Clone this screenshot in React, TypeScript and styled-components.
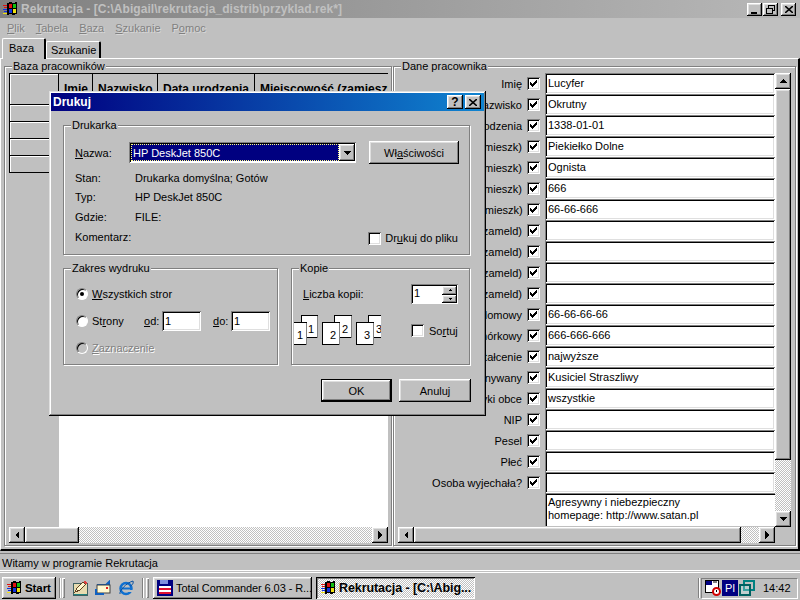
import React from "react";
import styled, { createGlobalStyle, css } from "styled-components";

const raised = css`
  box-shadow: inset -1px -1px 0 #000, inset 1px 1px 0 #fff, inset -2px -2px 0 #808080,
    inset 2px 2px 0 #dfdfdf;
`;

const sunken = css`
  box-shadow: inset 1px 1px 0 #808080, inset -1px -1px 0 #fff, inset 2px 2px 0 #000,
    inset -2px -2px 0 #dfdfdf;
`;

const dither = css`
  background-color: #c0c0c0;
  background-image: conic-gradient(#fff 25%, #c0c0c0 0 50%, #fff 0 75%, #c0c0c0 0);
  background-size: 2px 2px;
`;

const GlobalStyle = createGlobalStyle`
  html, body {
    margin: 0;
    padding: 0;
    background: #c0c0c0;
    overflow: hidden;
  }
  * {
    box-sizing: border-box;
  }
  svg {
    flex: none;
  }
  body {
    font-family: "Liberation Sans", Arial, sans-serif;
    font-size: 11px;
    color: #000;
  }
`;

const Screen = styled.div`
  position: relative;
  width: 800px;
  height: 600px;
  display: flex;
  flex-direction: column;
  overflow: hidden;
  background: #c0c0c0;
`;

const TitleBar = styled.div`
  height: 18px;
  flex: none;
  display: flex;
  align-items: center;
  padding: 0 4px 0 2px;
  background: linear-gradient(90deg, #808080, #b8b8b8);
`;

const TitleText = styled.div`
  margin-left: 3px;
  flex: 1;
  font-weight: bold;
  font-size: 12px;
  letter-spacing: 0.05px;
  color: #c0c0c0;
  white-space: nowrap;
`;

const CaptionButton = styled.div<{ $gap?: number }>`
  width: 15px;
  height: 13px;
  margin-left: ${(p) => p.$gap ?? 0}px;
  display: flex;
  align-items: center;
  justify-content: center;
  font-size: 12px;
  font-weight: bold;
  background: #c0c0c0;
  ${raised}
`;

const DialogCaptionButton = styled(CaptionButton)`
  width: 16px;
  height: 14px;
  color: #000;
`;

const MenuBar = styled.div`
  height: 20px;
  flex: none;
  display: flex;
  align-items: center;
  padding-left: 7px;
  gap: 11px;
  color: #808080;
  text-shadow: 1px 1px 0 #d8d8d8;
`;

const TabRow = styled.div`
  height: 20px;
  flex: none;
  display: flex;
  align-items: flex-end;
  padding-left: 2px;
  position: relative;
  z-index: 1;
`;

const Tab = styled.div<{ $active?: boolean }>`
  height: ${(p) => (p.$active ? 21 : 17)}px;
  width: ${(p) => (p.$active ? 44 : 55)}px;
  margin-bottom: ${(p) => (p.$active ? -1 : 0)}px;
  padding: ${(p) => (p.$active ? "1px 0 0 6px" : "1px 0 0 4px")};
  display: flex;
  align-items: ${(p) => (p.$active ? "flex-start" : "center")};
  line-height: 17px;
  background: #c0c0c0;
  border-top: 1px solid #fff;
  border-left: 1px solid #fff;
  border-right: 2px solid #000;
  border-top-left-radius: 2px;
  border-top-right-radius: 2px;
`;

const TabPanel = styled.div`
  height: 493px;
  flex: none;
  display: flex;
  gap: 1px;
  padding: 7px 2px 3px 3px;
  border-top: 1px solid #fff;
  border-left: 1px solid #fff;
  border-right: 2px solid #000;
  border-bottom: 2px solid #000;
`;

const Group = styled.div<{ $width?: number; $height?: number }>`
  position: relative;
  ${(p) => (p.$width ? `width: ${p.$width}px; flex: none;` : p.$height ? "flex: none;" : "flex: 1; min-width: 0;")}
  ${(p) => (p.$height ? `height: ${p.$height}px;` : "")}
  border: 1px solid #808080;
  box-shadow: 1px 1px 0 #fff, inset 1px 1px 0 #fff;
`;

const Legend = styled.div`
  position: absolute;
  top: -7px;
  left: 7px;
  padding: 0 1px;
  line-height: 13px;
  background: #c0c0c0;
  white-space: nowrap;
`;

const ScrollFrame = styled.div<{ $withVertical?: boolean }>`
  height: 100%;
  display: grid;
  grid-template-columns: ${(p) => (p.$withVertical ? "1fr 16px" : "1fr")};
  grid-template-rows: 1fr 16px;
  padding: 6px 4px 2px 4px;
`;

const HScroll = styled.div`
  display: flex;
  min-width: 0;
`;

const VScroll = styled.div`
  display: flex;
  flex-direction: column;
  min-height: 0;
`;

const ScrollButton = styled.div`
  width: 16px;
  height: 16px;
  flex: none;
  display: flex;
  align-items: center;
  justify-content: center;
  background: #c0c0c0;
  ${raised}
`;

const ScrollThumb = styled.div<{ $size: number; $vertical?: boolean }>`
  flex: none;
  ${(p) => (p.$vertical ? `height: ${p.$size}px;` : `width: ${p.$size}px;`)}
  background: #c0c0c0;
  ${raised}
`;

const ScrollTrack = styled.div`
  flex: 1;
  ${dither}
`;

const TableView = styled.div`
  background: #c0c0c0;
  display: flex;
  flex-direction: column;
  min-height: 0;
`;

const TableRow = styled.div`
  display: flex;
  flex: none;
`;

const FixedCell = styled.div<{ $height: number; $top?: boolean }>`
  width: 50px;
  height: ${(p) => p.$height}px;
  flex: none;
  border-left: 1px solid #000;
  border-right: 1px solid #000;
  border-bottom: 1px solid #000;
  ${(p) => (p.$top ? "border-top: 1px solid #000;" : "")}
  box-shadow: inset 1px 1px 0 #fff;
`;

const HeaderCell = styled.div<{ $width: number; $clip?: boolean }>`
  width: ${(p) => p.$width}px;
  height: 32px;
  flex: ${(p) => (p.$clip ? "1" : "none")};
  min-width: 0;
  display: flex;
  align-items: center;
  padding-left: 5px;
  font-size: 12px;
  font-weight: bold;
  white-space: nowrap;
  overflow: hidden;
  border-top: 1px solid #000;
  border-right: ${(p) => (p.$clip ? "none" : "1px solid #000")};
  border-bottom: 1px solid #000;
`;

const DataFill = styled.div`
  flex: 1;
  background: #fff;
`;

const TableRest = styled.div`
  flex: 1;
  margin-left: 50px;
  background: #fff;
`;

const FormView = styled.div`
  display: flex;
  flex-direction: column;
  overflow: hidden;
  min-height: 0;
`;

const FormRow = styled.div`
  height: 21px;
  flex: none;
  display: flex;
  align-items: center;
`;

const FieldLabel = styled.div`
  flex: 1;
  min-width: 0;
  text-align: right;
  white-space: nowrap;
`;

const CheckWrap = styled.div`
  width: 23px;
  flex: none;
  display: flex;
  justify-content: center;
`;

const CheckBoxFace = styled.div`
  width: 13px;
  height: 13px;
  flex: none;
  display: flex;
  align-items: center;
  justify-content: center;
  background: #fff;
  box-shadow: inset 1px 1px 0 #808080, inset -1px -1px 0 #fff, inset 2px 2px 0 #000,
    inset -2px -2px 0 #dfdfdf;
`;

const Field = styled.div`
  width: 230px;
  height: 21px;
  flex: none;
  padding: 0 0 2px 3px;
  display: flex;
  align-items: center;
  background: #fff;
  white-space: nowrap;
  overflow: hidden;
  ${sunken}
`;

const MemoRow = styled.div`
  flex: none;
  height: 33px;
  display: flex;
  justify-content: flex-end;
`;

const Memo = styled.div`
  width: 230px;
  padding: 3px 0 0 3px;
  line-height: 13px;
  background: #fff;
  box-shadow: inset 1px 1px 0 #808080, inset 2px 2px 0 #000;
  white-space: nowrap;
`;

const StatusBar = styled.div`
  margin-top: 2px;
  height: 18px;
  flex: none;
  display: flex;
  align-items: center;
  padding: 1px 0 0 2px;
  border-top: 1px solid #808080;
  border-bottom: 1px solid #fff;
`;

const Taskbar = styled.div`
  flex: 1;
  display: flex;
  align-items: center;
  padding: 3px 2px 0 2px;
  margin-top: 1px;
  border-top: 1px solid #fff;
`;

const TaskButton = styled.div<{ $active?: boolean; $width: number; $gap?: number }>`
  width: ${(p) => p.$width}px;
  height: 22px;
  flex: none;
  margin-left: ${(p) => p.$gap ?? 0}px;
  display: flex;
  align-items: center;
  gap: 3px;
  padding-left: 4px;
  white-space: nowrap;
  letter-spacing: -0.08px;
  ${(p) =>
    p.$active
      ? css`
          ${dither}
          font-size: 12.5px;
          font-weight: bold;
          box-shadow: inset 1px 1px 0 #000, inset -1px -1px 0 #fff, inset 2px 2px 0 #808080;
        `
      : raised}
`;

const StartLabel = styled.span`
  font-weight: bold;
  font-size: 11.5px;
`;

const Divider = styled.div<{ $left?: number }>`
  width: 1px;
  height: 20px;
  flex: none;
  margin-left: ${(p) => (p.$left === undefined ? "auto" : `${p.$left}px`)};
  background: #808080;
  box-shadow: 1px 0 0 #fff;
`;

const Grip = styled.div<{ $left: number }>`
  width: 3px;
  height: 20px;
  flex: none;
  margin-left: ${(p) => p.$left}px;
  background: #c0c0c0;
  box-shadow: inset 1px 1px 0 #fff, inset -1px -1px 0 #808080;
`;

const QuickIcons = styled.div<{ $left: number }>`
  display: flex;
  gap: 7px;
  flex: none;
  margin-left: ${(p) => p.$left}px;
`;

const Tray = styled.div`
  width: 97px;
  height: 21px;
  margin-left: 2px;
  flex: none;
  display: flex;
  align-items: center;
  padding-left: 3px;
  gap: 1px;
  border-top: 1px solid #808080;
  border-left: 1px solid #808080;
  border-bottom: 1px solid #fff;
  border-right: 1px solid #fff;
`;

const PlBadge = styled.div`
  width: 16px;
  height: 16px;
  flex: none;
  display: flex;
  align-items: center;
  justify-content: center;
  background: #000080;
  color: #fff;
`;

const Clock = styled.div`
  margin-left: 7px;
`;

/* the dialog floats over the main window */
const Dialog = styled.div`
  position: absolute;
  left: 49px;
  top: 91px;
  width: 437px;
  height: 325px;
  display: flex;
  flex-direction: column;
  padding: 2px;
  background: #c0c0c0;
  box-shadow: inset -1px -1px 0 #000, inset 1px 1px 0 #dfdfdf, inset -2px -2px 0 #808080,
    inset 2px 2px 0 #fff;
  z-index: 2;
`;

const DialogTitle = styled.div`
  height: 18px;
  flex: none;
  display: flex;
  align-items: center;
  padding: 0 3px 0 2px;
  background: linear-gradient(90deg, #000080, #1084d0);
  color: #fff;
  font-size: 12px;
  font-weight: bold;
`;

const DialogTitleText = styled.div`
  flex: 1;
`;

const DialogBody = styled.div`
  flex: 1;
  display: flex;
  flex-direction: column;
  padding: 14px 14px 0 12px;
`;

const PrinterGroupInner = styled.div`
  height: 100%;
  padding: 15px 10px 0 11px;
`;

const PrinterTop = styled.div`
  display: flex;
  align-items: center;
`;

const NameLabel = styled.div`
  width: 54px;
  flex: none;
`;

const Combo = styled.div`
  width: 227px;
  height: 21px;
  flex: none;
  display: flex;
  padding: 2px 1px 2px 2px;
  background: #fff;
  box-shadow: inset 1px 1px 0 #808080, inset -1px -1px 0 #fff, inset 2px 2px 0 #000;
`;

const ComboValue = styled.div`
  flex: 1;
  display: flex;
  align-items: center;
  padding-left: 2px;
  background: #000080;
  color: #fff;
  outline: 1px dotted #ffff80;
  outline-offset: -1px;
`;

const ComboButton = styled.div`
  width: 16px;
  flex: none;
  display: flex;
  align-items: center;
  justify-content: center;
  background: #c0c0c0;
  ${raised}
`;

const PushButton = styled.div<{ $width: number; $default?: boolean; $gap?: number }>`
  width: ${(p) => p.$width}px;
  height: 23px;
  flex: none;
  margin-left: ${(p) => p.$gap ?? 0}px;
  display: flex;
  align-items: center;
  justify-content: center;
  background: #c0c0c0;
  ${raised}
  ${(p) => (p.$default ? "border: 1px solid #000;" : "")}
`;

const InfoList = styled.div`
  margin-top: 4px;
  display: flex;
  flex-direction: column;
`;

const InfoRow = styled.div`
  height: 19.67px;
  display: flex;
  align-items: center;
`;

const InfoLabel = styled.div`
  width: 60px;
  flex: none;
`;

const CheckOption = styled.div`
  display: flex;
  align-items: center;
  gap: 5px;
`;

const PrintToFile = styled(CheckOption)`
  margin: 3px 1px 0 auto;
  gap: 4px;
`;

const GroupPair = styled.div`
  display: flex;
  justify-content: space-between;
  margin-top: 13px;
`;

const RangeInner = styled.div`
  height: 100%;
  padding: 11px 8px 0 12px;
  display: flex;
  flex-direction: column;
`;

const RangeRow = styled.div`
  height: 27px;
  display: flex;
  align-items: center;
  flex: none;
`;

const Radio = styled.div<{ $checked?: boolean; $disabled?: boolean }>`
  width: 12px;
  height: 12px;
  flex: none;
  margin-right: 4px;
  border-radius: 50%;
  display: flex;
  align-items: center;
  justify-content: center;
  background: ${(p) => (p.$disabled ? "#c0c0c0" : "#fff")};
  border: 1px solid;
  border-color: #808080 #fff #fff #808080;
  box-shadow: inset 1px 1px 0 #000;

  &::after {
    content: "";
    width: 4px;
    height: 4px;
    border-radius: 50%;
    background: ${(p) => (p.$checked ? "#000" : "transparent")};
  }
`;

const RangeText = styled.span<{ $disabled?: boolean }>`
  ${(p) => (p.$disabled ? "color: #808080; text-shadow: 1px 1px 0 #fff;" : "")}
`;

const PagesLabel = styled.span`
  width: 52px;
  flex: none;
`;

const PageLabel = styled.span<{ $left?: number }>`
  width: 18px;
  flex: none;
  margin-left: ${(p) => p.$left ?? 0}px;
`;

const PageInput = styled.div`
  width: 39px;
  height: 20px;
  flex: none;
  display: flex;
  align-items: center;
  padding-left: 3px;
  background: #fff;
  ${sunken}
`;

const CopiesInner = styled.div`
  height: 100%;
  padding: 15px 11px 0 2px;
  display: flex;
  flex-direction: column;
`;

const CopiesTop = styled.div`
  display: flex;
  align-items: center;
  justify-content: space-between;
  padding-left: 9px;
`;

const Spinner = styled.div`
  width: 47px;
  height: 20px;
  flex: none;
  display: flex;
  padding: 2px 1px 1px 3px;
  background: #fff;
  box-shadow: inset 1px 1px 0 #808080, inset -1px -1px 0 #fff, inset 2px 2px 0 #000;
`;

const SpinnerValue = styled.div`
  flex: 1;
  line-height: 15px;
`;

const SpinnerButtons = styled.div`
  width: 15px;
  flex: none;
  display: flex;
  flex-direction: column;
`;

const SpinButton = styled.div`
  flex: 1;
  display: flex;
  align-items: center;
  justify-content: center;
  background: #c0c0c0;
  ${raised}
`;

const CopiesBottom = styled.div`
  margin-top: 11px;
  display: flex;
  align-items: center;
`;

const SortOption = styled(CheckOption)`
  margin-left: 30px;
`;

const DialogActions = styled.div`
  margin-top: 14px;
  display: flex;
  justify-content: flex-end;
  margin-right: -1px;
`;

const Arrow = ({ dir, size = 4 }: { dir: "up" | "down" | "left" | "right"; size?: number }) => {
  const s = size;
  const points = {
    up: `0,${s} ${s * 2},${s} ${s},0`,
    down: `0,0 ${s * 2},0 ${s},${s}`,
    left: `${s},0 ${s},${s * 2} 0,${s}`,
    right: `0,0 0,${s * 2} ${s},${s}`,
  }[dir];
  const horizontal = dir === "up" || dir === "down";
  return (
    <svg width={horizontal ? s * 2 : s} height={horizontal ? s : s * 2} shapeRendering="crispEdges">
      <polygon points={points} fill="#000" />
    </svg>
  );
};

const Tick = () => (
  <svg width="7" height="7" viewBox="0 0 7 7" shapeRendering="crispEdges">
    <path d="M0 2h1v1h1v1h1V3h1V2h1V1h1V0h1v3H6v1H5v1H4v1H3v1H2V6H1V5H0z" fill="#000" />
  </svg>
);

const Check = ({ on }: { on?: boolean }) => <CheckBoxFace>{on && <Tick />}</CheckBoxFace>;

const CloseGlyph = () => (
  <svg width="8" height="7" viewBox="0 0 8 7">
    <path d="M0 0l8 7M8 0L0 7" stroke="#000" strokeWidth="1.6" />
  </svg>
);

const WinFlag = () => (
  <svg width="16" height="16" viewBox="0 0 16 16" shapeRendering="crispEdges">
    <path d="M5 2l3-1 3 1 4-1v12l-4 1-3-1-3 1z" fill="#000" />
    <rect x="7" y="3" width="3" height="4" fill="#e01010" />
    <rect x="11" y="3" width="3" height="4" fill="#10c010" />
    <rect x="7" y="8" width="3" height="4" fill="#1030e0" />
    <rect x="11" y="8" width="3" height="4" fill="#f0e010" />
    <rect x="1" y="4" width="4" height="1" fill="#e01010" />
    <rect x="2" y="6" width="3" height="1" fill="#e01010" />
    <rect x="1" y="8" width="4" height="1" fill="#1030e0" />
    <rect x="2" y="10" width="3" height="1" fill="#1030e0" />
    <rect x="1" y="12" width="4" height="1" fill="#f0e010" />
  </svg>
);

const DesktopIcon = () => (
  <svg width="16" height="16" viewBox="0 0 16 16" shapeRendering="crispEdges">
    <rect x="1" y="3" width="14" height="12" fill="#e8dcb0" stroke="#406060" />
    <path d="M3 12l2-4 6-6 3 2-6 6z" fill="#fff8d0" stroke="#604020" />
    <path d="M11 2l2-1 2 2-1 2z" fill="#e04040" />
    <rect x="2" y="14" width="13" height="1" fill="#208080" />
  </svg>
);

const MailIcon = () => (
  <svg width="16" height="16" viewBox="0 0 16 16">
    <path d="M2 5h9l3-3v4" fill="none" stroke="#1060c0" strokeWidth="2" />
    <rect x="2" y="5" width="13" height="8" fill="#fff8d0" stroke="#404040" />
    <rect x="11" y="7" width="2" height="2" fill="#e02020" />
    <path d="M1 9v5h8" fill="none" stroke="#1060c0" strokeWidth="2" />
  </svg>
);

const IeIcon = () => (
  <svg width="17" height="16" viewBox="0 0 17 16">
    <circle cx="8" cy="8.5" r="5.5" fill="none" stroke="#1070d0" strokeWidth="2.5" />
    <rect x="4" y="7.5" width="9" height="2" fill="#1070d0" />
    <rect x="10" y="10" width="5" height="2" fill="#c0c0c0" />
    <path d="M2 14C1 11 8 3 15 1c1 3-2 5-3 5" fill="none" stroke="#0850a0" strokeWidth="1" />
  </svg>
);

const FloppyIcon = () => (
  <svg width="16" height="16" viewBox="0 0 16 16" shapeRendering="crispEdges">
    <path d="M0 0h15l1 1v15H0z" fill="#000080" />
    <rect x="3" y="0" width="8" height="4" fill="#8090e0" />
    <rect x="2" y="6" width="12" height="2" fill="#fff" />
    <rect x="2" y="8" width="12" height="2" fill="#e01030" />
    <rect x="2" y="10" width="12" height="2" fill="#fff" />
    <rect x="2" y="12" width="12" height="2" fill="#e01030" />
  </svg>
);

const CalendarIcon = () => (
  <svg width="16" height="16" viewBox="0 0 16 16" shapeRendering="crispEdges">
    <rect x="0.5" y="0.5" width="13" height="12" fill="#fff" stroke="#000" />
    <rect x="1" y="1" width="6" height="4" fill="#000080" />
    <rect x="8" y="1" width="4" height="2" fill="#808080" />
    <circle cx="11.5" cy="11.5" r="3.5" fill="#fff" stroke="#d00000" strokeWidth="2" shapeRendering="auto" />
    <rect x="11" y="10" width="1" height="2" fill="#000" />
  </svg>
);

const NetIcon = () => (
  <svg width="16" height="16" viewBox="0 0 16 16" shapeRendering="crispEdges">
    <rect x="5" y="1" width="10" height="9" fill="none" stroke="#008080" strokeWidth="2" />
    <rect x="1" y="5" width="10" height="10" fill="#c0f0f0" fillOpacity="0.3" stroke="#006060" strokeWidth="2" />
  </svg>
);

const CollatePicture = () => {
  const sheets = [
    { x: 7, y: 0, n: 1, w: 16, base: 18 },
    { x: -4, y: 7, n: 1, w: 16, base: 17 },
    { x: 40, y: 0, n: 2, w: 17, base: 18 },
    { x: 28, y: 7, n: 2, w: 17, base: 17 },
    { x: 74, y: 0, n: 3, w: 17, base: 18 },
    { x: 62, y: 7, n: 3, w: 17, base: 17 },
  ];
  return (
    <svg width="87" height="31" shapeRendering="crispEdges">
      {sheets.map((s, i) => (
        <g key={i}>
          <rect x={s.x + 0.5} y={s.y + 0.5} width={s.w} height={22} fill="#fff" stroke="#000" />
          <rect x={s.x + s.w - 0.5} y={s.y + 1} width={1} height={22} fill="#808080" />
          <text
            x={s.x + s.w - 6}
            y={s.y + s.base}
            textAnchor="middle"
            fontFamily="Liberation Sans, sans-serif"
            fontSize="11"
            shapeRendering="auto"
          >
            {s.n}
          </text>
        </g>
      ))}
    </svg>
  );
};

const formRows = [
  ["Imię", "Lucyfer"],
  ["Nazwisko", "Okrutny"],
  ["Data urodzenia", "1338-01-01"],
  ["Miejscowość (zamieszk)", "Piekiełko Dolne"],
  ["Ulica (zamieszk)", "Ognista"],
  ["Numer domu (zamieszk)", "666"],
  ["Kod pocztowy (zamieszk)", "66-66-666"],
  ["Miejscowość (zameld)", ""],
  ["Ulica (zameld)", ""],
  ["Numer domu (zameld)", ""],
  ["Kod pocztowy (zameld)", ""],
  ["Telefon domowy", "66-66-66-66"],
  ["Telefon komórkowy", "666-666-666"],
  ["Wykształcenie", "najwyższe"],
  ["Zawód wykonywany", "Kusiciel Straszliwy"],
  ["Języki obce", "wszystkie"],
  ["NIP", ""],
  ["Pesel", ""],
  ["Płeć", ""],
  ["Osoba wyjechała?", ""],
];

const headers: [string, number][] = [
  ["Imię", 34],
  ["Nazwisko", 65],
  ["Data urodzenia", 97],
  ["Miejscowość (zamieszk", 133],
];

const App = () => {
  return (
    <Screen>
      <GlobalStyle />
      <TitleBar>
        <WinFlag />
        <TitleText>Rekrutacja - [C:\Abigail\rekrutacja_distrib\przyklad.rek*]</TitleText>
        <CaptionButton>
          <svg width="8" height="9" shapeRendering="crispEdges">
            <rect x="0" y="7" width="6" height="2" fill="#000" />
          </svg>
        </CaptionButton>
        <CaptionButton $gap={1}>
          <svg width="10" height="9" viewBox="0 0 10 9" shapeRendering="crispEdges">
            <path d="M2.5 2.5V.5h6v5h-2M.5 3.5h6v5h-6z" fill="none" stroke="#000" />
          </svg>
        </CaptionButton>
        <CaptionButton $gap={3}>
          <CloseGlyph />
        </CaptionButton>
      </TitleBar>
      <MenuBar>
        <span><u>P</u>lik</span>
        <span><u>T</u>abela</span>
        <span><u>B</u>aza</span>
        <span><u>S</u>zukanie</span>
        <span>P<u>o</u>moc</span>
      </MenuBar>
      <TabRow>
        <Tab $active>Baza</Tab>
        <Tab>Szukanie</Tab>
      </TabRow>
      <TabPanel>
        <Group $width={388}>
          <Legend>Baza pracowników</Legend>
          <ScrollFrame>
            <TableView>
              <TableRow>
                <FixedCell $height={32} $top />
                {headers.map(([name, width], i) => (
                  <HeaderCell key={name} $width={width} $clip={i === headers.length - 1}>
                    {name}
                  </HeaderCell>
                ))}
              </TableRow>
              {[0, 1, 2, 3].map((row) => (
                <TableRow key={row}>
                  <FixedCell $height={17} />
                  <DataFill />
                </TableRow>
              ))}
              <TableRest />
            </TableView>
            <HScroll>
              <ScrollButton><Arrow dir="left" /></ScrollButton>
              <ScrollThumb $size={54} />
              <ScrollTrack />
              <ScrollButton><Arrow dir="right" /></ScrollButton>
            </HScroll>
          </ScrollFrame>
        </Group>
        <Group>
          <Legend>Dane pracownika</Legend>
          <ScrollFrame $withVertical>
            <FormView>
              {formRows.map(([label, value]) => (
                <FormRow key={label}>
                  <FieldLabel>{label}</FieldLabel>
                  <CheckWrap><Check on /></CheckWrap>
                  <Field>{value}</Field>
                </FormRow>
              ))}
              <MemoRow>
                <Memo>
                  Agresywny i niebezpieczny
                  <br />
                  homepage: http://www.satan.pl
                </Memo>
              </MemoRow>
            </FormView>
            <VScroll>
              <ScrollButton><Arrow dir="up" /></ScrollButton>
              <ScrollThumb $size={371} $vertical />
              <ScrollTrack />
              <ScrollButton><Arrow dir="down" /></ScrollButton>
            </VScroll>
            <HScroll>
              <ScrollButton><Arrow dir="left" /></ScrollButton>
              <ScrollThumb $size={327} />
              <ScrollTrack />
              <ScrollButton><Arrow dir="right" /></ScrollButton>
            </HScroll>
          </ScrollFrame>
        </Group>
      </TabPanel>
      <StatusBar>Witamy w programie Rekrutacja</StatusBar>
      <Taskbar>
        <TaskButton $width={54}>
          <WinFlag />
          <StartLabel>Start</StartLabel>
        </TaskButton>
        <Divider $left={3} />
        <Grip $left={2} />
        <QuickIcons $left={7}>
          <DesktopIcon />
          <MailIcon />
          <IeIcon />
        </QuickIcons>
        <Divider $left={7} />
        <Grip $left={3} />
        <TaskButton $width={159} $gap={4}>
          <FloppyIcon />
          Total Commander 6.03 - R...
        </TaskButton>
        <TaskButton $active $width={159} $gap={4}>
          <WinFlag />
          Rekrutacja - [C:\Abig...
        </TaskButton>
        <Divider />
        <Tray>
          <CalendarIcon />
          <PlBadge>Pl</PlBadge>
          <NetIcon />
          <Clock>14:42</Clock>
        </Tray>
      </Taskbar>
      <Dialog>
        <DialogTitle>
          <DialogTitleText>Drukuj</DialogTitleText>
          <DialogCaptionButton>?</DialogCaptionButton>
          <DialogCaptionButton $gap={2}>
            <CloseGlyph />
          </DialogCaptionButton>
        </DialogTitle>
        <DialogBody>
          <Group $height={130}>
            <Legend>Drukarka</Legend>
            <PrinterGroupInner>
              <PrinterTop>
                <NameLabel><u>N</u>azwa:</NameLabel>
                <Combo>
                  <ComboValue>HP DeskJet 850C</ComboValue>
                  <ComboButton><Arrow dir="down" /></ComboButton>
                </Combo>
                <PushButton $width={90} $gap={13}>Wł<u>a</u>ściwości</PushButton>
              </PrinterTop>
              <InfoList>
                <InfoRow><InfoLabel>Stan:</InfoLabel>Drukarka domyślna; Gotów</InfoRow>
                <InfoRow><InfoLabel>Typ:</InfoLabel>HP DeskJet 850C</InfoRow>
                <InfoRow><InfoLabel>Gdzie:</InfoLabel>FILE:</InfoRow>
                <InfoRow>
                  <InfoLabel>Komentarz:</InfoLabel>
                  <PrintToFile>
                    <Check />
                    <span>Dr<u>u</u>kuj do pliku</span>
                  </PrintToFile>
                </InfoRow>
              </InfoList>
            </PrinterGroupInner>
          </Group>
          <GroupPair>
            <Group $width={215} $height={97}>
              <Legend>Zakres wydruku</Legend>
              <RangeInner>
                <RangeRow>
                  <Radio $checked />
                  <span><u>W</u>szystkich stror</span>
                </RangeRow>
                <RangeRow>
                  <Radio />
                  <PagesLabel>St<u>r</u>ony</PagesLabel>
                  <PageLabel><u>o</u>d:</PageLabel>
                  <PageInput>1</PageInput>
                  <PageLabel $left={12}><u>d</u>o:</PageLabel>
                  <PageInput>1</PageInput>
                </RangeRow>
                <RangeRow>
                  <Radio $disabled />
                  <RangeText $disabled><u>Z</u>aznaczenie</RangeText>
                </RangeRow>
              </RangeInner>
            </Group>
            <Group $width={179} $height={97}>
              <Legend>Kopie</Legend>
              <CopiesInner>
                <CopiesTop>
                  <span><u>L</u>iczba kopii:</span>
                  <Spinner>
                    <SpinnerValue>1</SpinnerValue>
                    <SpinnerButtons>
                      <SpinButton><Arrow dir="up" size={2} /></SpinButton>
                      <SpinButton><Arrow dir="down" size={2} /></SpinButton>
                    </SpinnerButtons>
                  </Spinner>
                </CopiesTop>
                <CopiesBottom>
                  <CollatePicture />
                  <SortOption>
                    <Check />
                    <span>So<u>r</u>tuj</span>
                  </SortOption>
                </CopiesBottom>
              </CopiesInner>
            </Group>
          </GroupPair>
          <DialogActions>
            <PushButton $width={71} $default>OK</PushButton>
            <PushButton $width={72} $gap={7}>Anuluj</PushButton>
          </DialogActions>
        </DialogBody>
      </Dialog>
    </Screen>
  );
};

export default App;
